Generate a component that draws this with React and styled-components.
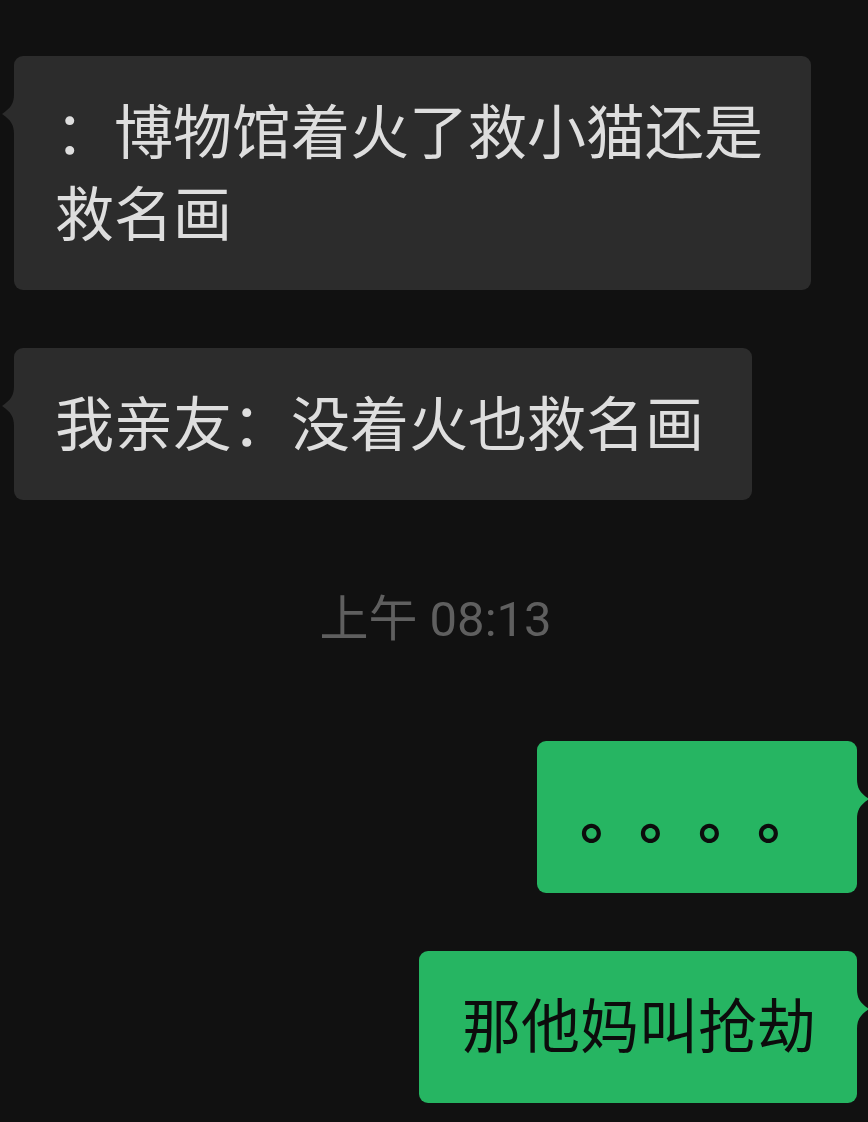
import React from 'react';
import styled, {createGlobalStyle} from "styled-components";

const GlobalStyle = createGlobalStyle`
  html, body {
    margin: 0;
    padding: 0;
    background: #111111;
  }
  body {
    font-family: "Noto Sans CJK SC", "Noto Sans", Roboto, sans-serif;
  }
`;

const Chat = styled.main`
  display: flex;
  flex-direction: column;
  width: 868px;
  min-height: 1122px;
  padding: 56px 11px 0 14px;
  box-sizing: border-box;
  background: #111111;
`;

const Row = styled.div`
  display: flex;
  justify-content: ${props => props.mine ? "flex-end" : "flex-start"};
  margin-top: ${props => props.gap || 0}px;
`;

const Bubble = styled.div`
  position: relative;
  max-width: 797px;
  box-sizing: border-box;
  padding: ${props => props.mine ? "31px 41px 39px 43px" : "32px 48px 38px 41px"};
  border-radius: 9px;
  background: ${props => props.mine ? "#26b562" : "#2c2c2c"};
  color: ${props => props.mine ? "#0c0c0c" : "#dedede"};
  font-size: 59px;
  line-height: 82px;
  letter-spacing: 0;
  word-break: break-all;
  text-spacing-trim: space-all;
  font-feature-settings: "halt" 0, "chws" 0, "palt" 0;
  font-kerning: none;
`;

const Dots = styled.span`
  font-weight: 700;
`;

const Tail = styled.svg`
  position: absolute;
  top: 38px;
  width: 13px;
  height: 40px;
  ${props => props.mine ? "right: -12px;" : "left: -12px;"}
  fill: ${props => props.mine ? "#26b562" : "#2c2c2c"};
`;

const Time = styled.div`
  margin: 90px 0 91px;
  text-align: center;
  font-family: Roboto, "Noto Sans CJK SC", sans-serif;
  font-size: 49px;
  line-height: 60px;
  color: #5f5f5f;
`;

const BubbleTail = ({mine}) => (
  <Tail mine={mine} viewBox="0 0 13 40">
    {mine
      ? <path d="M0 0 L1 0 C1 9 4 14 13 20 C4 26 1 31 1 40 L0 40 Z" />
      : <path d="M13 0 L12 0 C12 9 9 14 0 20 C9 26 12 31 12 40 L13 40 Z" />}
  </Tail>
);

const Message = ({mine, gap, children}) => (
  <Row mine={mine} gap={gap}>
    <Bubble mine={mine}>
      <BubbleTail mine={mine} />
      {children}
    </Bubble>
  </Row>
);

const App = () => (
  <>
    <GlobalStyle />
    <Chat>
      <Message>：博物馆着火了救小猫还是救名画</Message>
      <Message gap={58}>我亲友：没着火也救名画</Message>
      <Time>上午 08:13</Time>
      <Message mine><Dots>。。。。</Dots></Message>
      <Message mine gap={58}>那他妈叫抢劫</Message>
    </Chat>
  </>
);

export default App;
